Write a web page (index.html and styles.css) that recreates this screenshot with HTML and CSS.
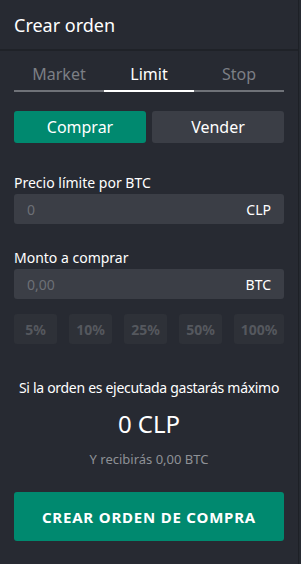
FILE: index.html
```html
<!DOCTYPE html>
<html lang="es">
<head>
  <meta charset="UTF-8">
  <title>Crear orden</title>
  <link rel="stylesheet" href="styles.css">
</head>
<body>

<div class="panel">
  <div class="panel-header">Crear orden</div>

  <div class="panel-body">
    <div class="tabs">
      <div class="tab">Market</div>
      <div class="tab active">Limit</div>
      <div class="tab">Stop</div>
    </div>

    <div class="side-buttons">
      <button class="side-btn buy">Comprar</button>
      <button class="side-btn">Vender</button>
    </div>

    <label class="field-label first">Precio límite por BTC</label>
    <div class="field">
      <input type="text" placeholder="0">
      <span class="unit">CLP</span>
    </div>

    <label class="field-label">Monto a comprar</label>
    <div class="field">
      <input type="text" placeholder="0,00">
      <span class="unit">BTC</span>
    </div>

    <div class="percents">
      <button class="pct">5%</button>
      <button class="pct">10%</button>
      <button class="pct">25%</button>
      <button class="pct">50%</button>
      <button class="pct">100%</button>
    </div>

    <div class="summary">
      <div class="summary-text">Si la orden es ejecutada gastarás máximo</div>
      <div class="summary-total">0 CLP</div>
      <div class="summary-sub">Y recibirás 0,00 BTC</div>
    </div>

    <button class="submit">CREAR ORDEN DE COMPRA</button>
  </div>
</div>

</body>
</html>
```

FILE: styles.css
```css
* {
  box-sizing: border-box;
}

body {
  margin: 0;
  background: #262a31;
  font-family: "Noto Sans", Arial, sans-serif;
  color: #fff;
}

.panel {
  width: 299px;
  height: 564px;
  border-right: 1px solid #1d2026;
  background: #272a32;
}

.panel-header {
  height: 51px;
  padding: 12px 14px 0;
  font-size: 18px;
  line-height: 26px;
  border-bottom: 2px solid #1f2228;
}

.panel-body {
  padding: 13px 14px 0;
}

.tabs {
  display: flex;
}

.tab {
  flex: 1;
  text-align: center;
  font-size: 16px;
  line-height: 20px;
  color: #7c7f85;
  padding-bottom: 6px;
  border-bottom: 2px solid #6f7278;
}

.tab.active {
  color: #fff;
  border-bottom-color: #fff;
}

.side-buttons {
  display: flex;
  gap: 6px;
  margin-top: 19px;
}

button {
  font-family: inherit;
  border: none;
  cursor: pointer;
}

.side-btn {
  flex: 1;
  height: 32px;
  border-radius: 3px;
  background: #3b3e46;
  color: #fff;
  font-size: 16px;
}

.side-btn.buy {
  background: #00896f;
}

.field-label {
  display: block;
  margin-top: 24px;
  font-size: 14px;
  line-height: 20px;
}

.field-label.first {
  margin-top: 30px;
}

.field {
  display: flex;
  align-items: center;
  height: 30px;
  margin-top: 1px;
  padding: 0 13px;
  border-radius: 3px;
  background: #3b3e46;
}

.field input {
  flex: 1;
  min-width: 0;
  border: none;
  background: none;
  outline: none;
  color: #fff;
  font-family: inherit;
  font-size: 14px;
  padding: 0;
}

.field input::placeholder {
  color: #6d7076;
}

.unit {
  font-size: 14px;
}

.percents {
  display: flex;
  justify-content: space-between;
  margin-top: 15px;
}

.pct {
  width: 43px;
  height: 30px;
  border-radius: 3px;
  background: #2e3138;
  color: #55585e;
  font-size: 14px;
  font-weight: bold;
  padding: 0;
}

.pct:last-child {
  width: 50px;
}

.summary {
  text-align: center;
  margin-top: 34px;
}

.summary-text {
  font-size: 14px;
  line-height: 20px;
  letter-spacing: -0.3px;
  white-space: nowrap;
}

.summary-total {
  margin-top: 11px;
  font-size: 24px;
  line-height: 30px;
}

.summary-sub {
  margin-top: 12px;
  font-size: 13px;
  line-height: 16px;
  color: #8e9196;
}

.submit {
  display: block;
  width: 100%;
  height: 49px;
  margin-top: 25px;
  border-radius: 3px;
  background: #00896f;
  color: #fff;
  font-size: 15px;
  font-weight: bold;
  letter-spacing: 0.8px;
}
```
